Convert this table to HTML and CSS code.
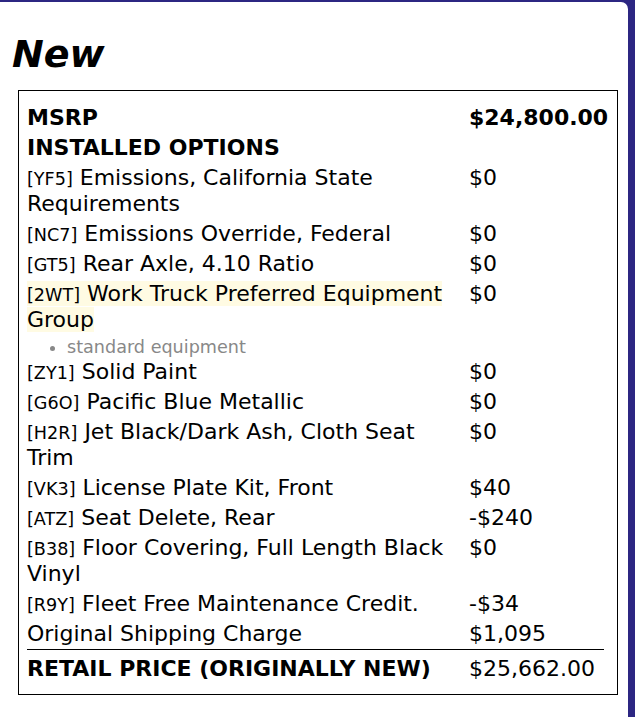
FILE: index.html
```html
<!DOCTYPE html>
<html>
<head>
<meta charset="utf-8">
<link rel="stylesheet" href="styles.css">
</head>
<body>
<div class="panel">
  <h1 class="title">New</h1>
  <div class="box">
    <table class="prices">
      <colgroup><col class="c-desc"><col class="c-amt"></colgroup>
      <tr class="strong">
        <td class="desc">MSRP</td>
        <td class="amt">$24,800.00</td>
      </tr>
      <tr class="strong">
        <td class="desc" colspan="2">INSTALLED OPTIONS</td>
      </tr>
      <tr>
        <td class="desc"><span class="code">[YF5]</span> Emissions, California State Requirements</td>
        <td class="amt">$0</td>
      </tr>
      <tr>
        <td class="desc"><span class="code">[NC7]</span> Emissions Override, Federal</td>
        <td class="amt">$0</td>
      </tr>
      <tr>
        <td class="desc"><span class="code">[GT5]</span> Rear Axle, 4.10 Ratio</td>
        <td class="amt">$0</td>
      </tr>
      <tr>
        <td class="desc"><span class="hl"><span class="code">[2WT]</span> Work Truck Preferred Equipment Group</span>
          <ul class="notes"><li>standard equipment</li></ul>
        </td>
        <td class="amt">$0</td>
      </tr>
      <tr>
        <td class="desc"><span class="code">[ZY1]</span> Solid Paint</td>
        <td class="amt">$0</td>
      </tr>
      <tr>
        <td class="desc"><span class="code">[G6O]</span> Pacific Blue Metallic</td>
        <td class="amt">$0</td>
      </tr>
      <tr>
        <td class="desc"><span class="code">[H2R]</span> Jet Black/Dark Ash, Cloth Seat Trim</td>
        <td class="amt">$0</td>
      </tr>
      <tr>
        <td class="desc"><span class="code">[VK3]</span> License Plate Kit, Front</td>
        <td class="amt">$40</td>
      </tr>
      <tr>
        <td class="desc"><span class="code">[ATZ]</span> Seat Delete, Rear</td>
        <td class="amt">-$240</td>
      </tr>
      <tr>
        <td class="desc"><span class="code">[B38]</span> Floor Covering, Full Length Black Vinyl</td>
        <td class="amt">$0</td>
      </tr>
      <tr>
        <td class="desc"><span class="code">[R9Y]</span> Fleet Free Maintenance Credit.</td>
        <td class="amt">-$34</td>
      </tr>
      <tr>
        <td class="desc">Original Shipping Charge</td>
        <td class="amt">$1,095</td>
      </tr>
      <tr class="total">
        <td class="desc">RETAIL PRICE (ORIGINALLY NEW)</td>
        <td class="amt">$25,662.00</td>
      </tr>
    </table>
  </div>
</div>
</body>
</html>
```

FILE: styles.css
```css
html, body {
  margin: 0;
  padding: 0;
  background: #2c2682;
}
body {
  font-family: "DejaVu Sans", Verdana, sans-serif;
  color: #000;
  height: 717px;
  overflow: hidden;
}
.panel {
  margin-top: 2px;
  width: 628px;
  height: 715px;
  background: #fff;
  border-top-right-radius: 7px;
  padding: 30px 0 0 12px;
  box-sizing: border-box;
}
.title {
  margin: 0;
  font-size: 38px;
  font-weight: bold;
  font-style: italic;
  line-height: 44px;
}
.box {
  margin: 14px 0 0 6px;
  width: 600px;
  box-sizing: border-box;
  border: 1px solid #000;
  padding: 12px 8px 10px 8px;
}
.prices {
  width: 577px;
  table-layout: fixed;
  border-collapse: collapse;
  font-size: 22px;
  line-height: 26px;
}
.c-desc {
  width: 442px;
}
.c-amt {
  width: 135px;
}
.prices td {
  padding: 2px 0;
  vertical-align: top;
  text-align: left;
}
.prices td.desc {
  padding-right: 12px;
}
.prices .amt {
  white-space: nowrap;
}
.strong td {
  font-weight: bold;
}
.code {
  font-size: 0.8em;
  line-height: 1;
}
.hl {
  background: #fffbe3;
}
.notes {
  margin: 6px 0 0 0;
  padding-left: 40px;
  font-size: 0.8em;
  line-height: 16px;
  color: #888;
}
.total td {
  border-top: 1px solid #000;
  padding-top: 6px;
}
.total .desc {
  font-weight: bold;
}
```
